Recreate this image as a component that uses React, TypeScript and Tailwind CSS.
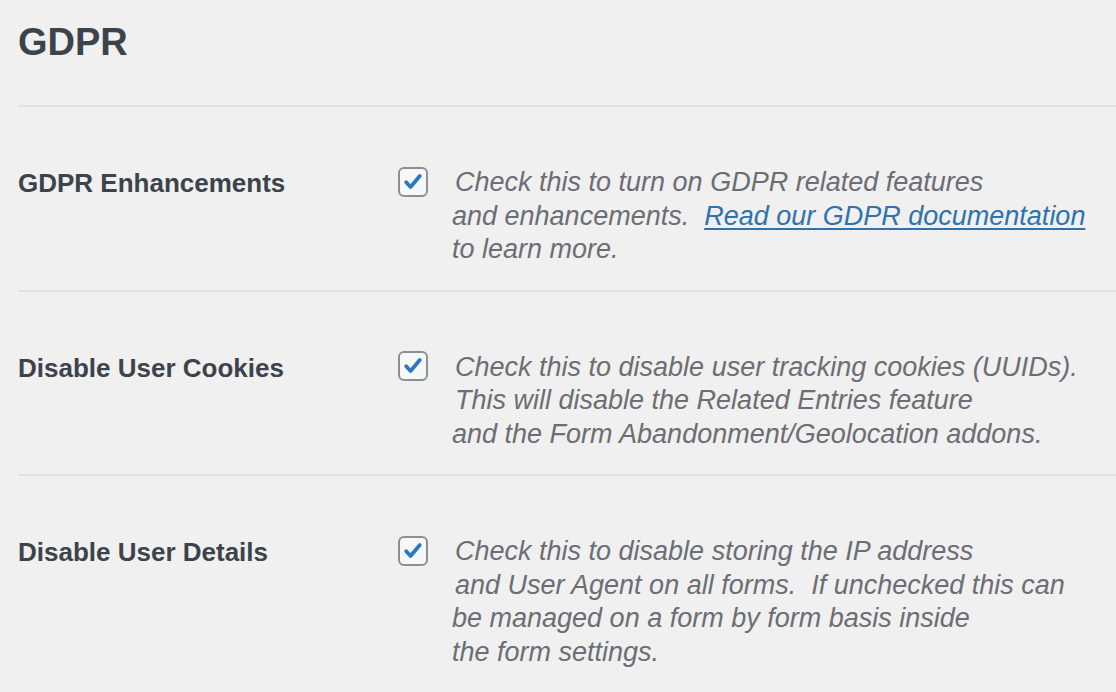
const Check = () => (
  <span className="flex h-[30px] w-[30px] shrink-0 items-center justify-center rounded-[6px] border-2 border-[#8c8f94] bg-[#f6f7f7]">
    <svg width="22" height="22" viewBox="0 0 20 20" fill="none">
      <path d="M3.8 10.2l4 4.3L16.2 4.6" stroke="#2a78bd" strokeWidth="3.4" strokeLinecap="round" strokeLinejoin="round" />
    </svg>
  </span>
)

type Line = { text: React.ReactNode; indent: boolean }

const Row = ({ label, lines, last }: { label: string; lines: Line[]; last?: boolean }) => (
  <div className={`flex pt-[59px] pb-[23px] ${last ? '' : 'border-b-2 border-[#e2e2e3]'}`}>
    <div className="w-[380px] shrink-0 text-[26px] font-bold leading-[34px] text-[#3c434a]">{label}</div>
    <div className="flex">
      <div className="flex h-[31px] items-center">
        <Check />
      </div>
      <div className="ml-[24px] text-[27px] italic leading-[33.5px] text-[#6b6e73]">
        {lines.map((l, i) => (
          <span key={i} className={`block whitespace-pre ${l.indent ? 'pl-[3px]' : ''}`}>
            {l.text}
          </span>
        ))}
      </div>
    </div>
  </div>
)

export default function App() {
  return (
    <div className="min-h-screen bg-[#f0f0f1] pl-[18px] font-['Liberation_Sans',Arial,sans-serif]">
      <h2 className="pt-[20px] pb-[41px] text-[38px] font-bold leading-[44px] text-[#3c434a]">GDPR</h2>
      <div className="border-t-2 border-[#e2e2e3]">
        <Row
          label="GDPR Enhancements"
          lines={[
            { text: 'Check this to turn on GDPR related features', indent: true },
            {
              text: (
                <>
                  and enhancements.{'  '}
                  <a href="#" className="text-[#2f73ad] underline decoration-2 underline-offset-[3px]">
                    Read our GDPR documentation
                  </a>
                </>
              ),
              indent: false,
            },
            { text: 'to learn more.', indent: false },
          ]}
        />
        <Row
          label="Disable User Cookies"
          lines={[
            { text: 'Check this to disable user tracking cookies (UUIDs).', indent: true },
            { text: 'This will disable the Related Entries feature', indent: true },
            { text: 'and the Form Abandonment/Geolocation addons.', indent: false },
          ]}
        />
        <Row
          last
          label="Disable User Details"
          lines={[
            { text: 'Check this to disable storing the IP address', indent: true },
            { text: 'and User Agent on all forms.  If unchecked this can', indent: true },
            { text: 'be managed on a form by form basis inside', indent: false },
            { text: 'the form settings.', indent: false },
          ]}
        />
      </div>
    </div>
  )
}
